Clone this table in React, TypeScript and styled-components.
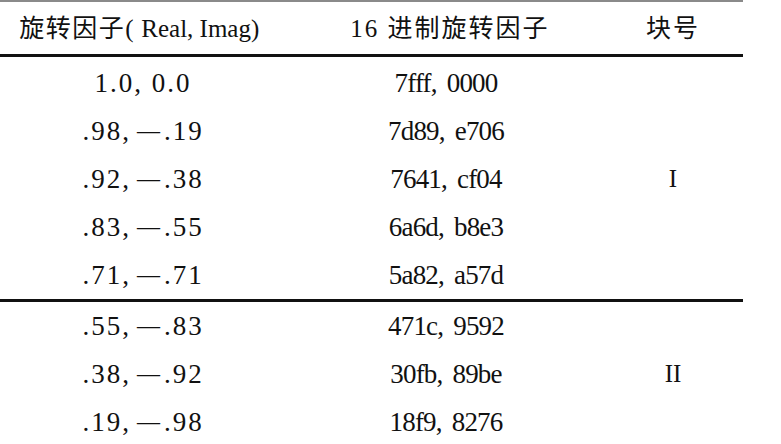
import React from 'react';
import styled, { createGlobalStyle } from 'styled-components';

const GlobalStyle = createGlobalStyle`
  body {
    margin: 0;
    background: #fff;
  }
`;

const Table = styled.div`
  width: 743px;
  font-family: "Liberation Serif", "Noto Sans CJK SC", serif;
  color: #111;
  border-top: 2px solid #8a8a8a;
`;

const Grid = styled.div`
  display: grid;
  grid-template-columns: 280px 340px 106px 1fr;
`;

const HeadRow = styled(Grid)`
  height: 52px;
  align-items: center;
  border-bottom: 3px solid #111;
  font-size: 25px;
`;

const HeadCell = styled.div<{ $spacing?: number }>`
  text-align: center;
  padding-bottom: 4px;
  white-space: nowrap;
  letter-spacing: ${p => p.$spacing ?? 0}px;
`;

const Latin = styled.span`
  font-size: 25px;
  letter-spacing: 0;
`;

const Group = styled(Grid)<{ $last?: boolean }>`
  grid-auto-rows: 48px;
  padding-top: ${p => (p.$last ? '0' : '2px')};
  border-bottom: ${p => (p.$last ? 'none' : '3px solid #111')};
`;

const ValueCell = styled.div`
  display: flex;
  align-items: center;
  justify-content: center;
  font-size: 27px;
  letter-spacing: 2px;
  white-space: pre;
  padding-left: 6px;
`;

const Minus = styled.span`
  font-size: 23px;
  letter-spacing: 0;
  margin: 0 4px 0 6px;
`;

const HexCell = styled.div`
  display: flex;
  align-items: center;
  justify-content: center;
  font-size: 27px;
  letter-spacing: -0.8px;
  word-spacing: 4px;
  padding-right: 8px;
  white-space: pre;
`;

const BlockCell = styled.div<{ $rows: number }>`
  grid-column: 3;
  grid-row: 1 / span ${p => p.$rows};
  display: flex;
  align-items: center;
  justify-content: center;
  font-size: 25px;
`;

type Row = { re: string; im: string; hex: string };

const groups: { block: string; rows: Row[] }[] = [
  {
    block: 'I',
    rows: [
      { re: '1.0,', im: ' 0.0', hex: '7fff, 0000' },
      { re: '.98,', im: '.19', hex: '7d89, e706' },
      { re: '.92,', im: '.38', hex: '7641, cf04' },
      { re: '.83,', im: '.55', hex: '6a6d, b8e3' },
      { re: '.71,', im: '.71', hex: '5a82, a57d' },
    ],
  },
  {
    block: 'II',
    rows: [
      { re: '.55,', im: '.83', hex: '471c, 9592' },
      { re: '.38,', im: '.92', hex: '30fb, 89be' },
      { re: '.19,', im: '.98', hex: '18f9, 8276' },
    ],
  },
];

export default function App() {
  return (
    <>
      <GlobalStyle />
      <Table>
        <HeadRow>
          <HeadCell $spacing={1.5}>
            旋转因子(<Latin> Real, Imag</Latin>)
          </HeadCell>
          <HeadCell $spacing={2}>16 进制旋转因子</HeadCell>
          <HeadCell $spacing={2}>块号</HeadCell>
        </HeadRow>
        {groups.map((g, i) => (
          <Group key={g.block} $last={i === groups.length - 1}>
            {g.rows.map((r, j) => (
              <React.Fragment key={r.hex}>
                <ValueCell style={{ gridRow: j + 1, gridColumn: 1 }}>
                  {r.re}
                  {r.re === '1.0,' ? null : <Minus>—</Minus>}
                  {r.im}
                </ValueCell>
                <HexCell style={{ gridRow: j + 1, gridColumn: 2 }}>{r.hex}</HexCell>
              </React.Fragment>
            ))}
            <BlockCell $rows={g.rows.length}>{g.block}</BlockCell>
          </Group>
        ))}
      </Table>
    </>
  );
}
